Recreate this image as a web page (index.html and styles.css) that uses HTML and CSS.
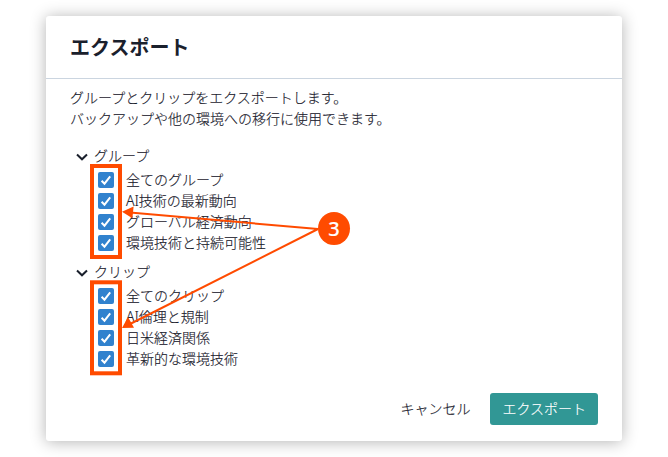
FILE: index.html
```html
<!DOCTYPE html>
<html lang="ja">
<head>
<meta charset="utf-8">
<title>エクスポート</title>
<link rel="stylesheet" href="styles.css">
</head>
<body>
<section class="dialog">
  <header class="dialog-header"><h1>エクスポート</h1></header>
  <div class="dialog-body">
    <p>グループとクリップをエクスポートします。<br>バックアップや他の環境への移行に使用できます。</p>
    <div class="group">
      <div class="group-title"><svg class="chevron" viewBox="0 0 12 8"><path d="M1 1.5 6 6.3 11 1.5"/></svg>グループ</div>
      <ul class="options">
        <li><span class="check"><svg viewBox="0 0 16 16"><path d="M3.6 8.7 6.5 11.7 12.2 4.4"/></svg></span>全てのグループ</li>
        <li><span class="check"><svg viewBox="0 0 16 16"><path d="M3.6 8.7 6.5 11.7 12.2 4.4"/></svg></span>AI技術の最新動向</li>
        <li><span class="check"><svg viewBox="0 0 16 16"><path d="M3.6 8.7 6.5 11.7 12.2 4.4"/></svg></span>グローバル経済動向</li>
        <li><span class="check"><svg viewBox="0 0 16 16"><path d="M3.6 8.7 6.5 11.7 12.2 4.4"/></svg></span>環境技術と持続可能性</li>
      </ul>
    </div>
    <div class="group">
      <div class="group-title"><svg class="chevron" viewBox="0 0 12 8"><path d="M1 1.5 6 6.3 11 1.5"/></svg>クリップ</div>
      <ul class="options">
        <li><span class="check"><svg viewBox="0 0 16 16"><path d="M3.6 8.7 6.5 11.7 12.2 4.4"/></svg></span>全てのクリップ</li>
        <li><span class="check"><svg viewBox="0 0 16 16"><path d="M3.6 8.7 6.5 11.7 12.2 4.4"/></svg></span>AI倫理と規制</li>
        <li><span class="check"><svg viewBox="0 0 16 16"><path d="M3.6 8.7 6.5 11.7 12.2 4.4"/></svg></span>日米経済関係</li>
        <li><span class="check"><svg viewBox="0 0 16 16"><path d="M3.6 8.7 6.5 11.7 12.2 4.4"/></svg></span>革新的な環境技術</li>
      </ul>
    </div>
  </div>
  <footer class="dialog-footer">
    <button class="btn">キャンセル</button>
    <button class="btn primary">エクスポート</button>
  </footer>
</section>
<svg class="callout" viewBox="0 0 668 457">
  <g class="callout-lines">
    <rect x="92" y="166" width="28" height="91" stroke-width="4"/>
    <rect x="92" y="282.3" width="28" height="91" stroke-width="4"/>
    <path d="M318 229 130 212.5M318 229 130 324" stroke-width="2"/>
  </g>
  <path class="callout-fill" d="M122 211.8 133.6 206.6 132.4 218.2ZM122 328 128 317 134 327.8Z"/>
</svg>
<span class="callout-number">3</span>
</body>
</html>
```
FILE: styles.css
```css
* { box-sizing: border-box; }
body {
  margin: 0;
  padding: 16px 46px;
  height: 457px;
  overflow: hidden;
  position: relative;
  background: #fff;
  color: #1a202c;
  font: 300 14px/21px "Noto Sans", "Noto Sans CJK JP", sans-serif;
  -webkit-text-stroke: .15px currentColor;
}
.dialog {
  display: flex;
  flex-direction: column;
  width: 576px;
  height: 425px;
  background: #fff;
  border-radius: 3px;
  box-shadow: 0 1px 16px rgba(0, 0, 0, .3);
}
.dialog-header {
  height: 63px;
  padding: 17px 24px 15px;
  border-bottom: 1px solid #cbd5e0;
}
h1 { margin: 0; font-size: 20px; line-height: 30px; font-weight: 700; -webkit-text-stroke: 0; }
.dialog-body { flex: 1; padding: 8px 24px; }
p { margin: 0 0 16px; }
.group { margin-bottom: 8px; }
.group-title { display: flex; align-items: center; gap: 6px; padding-left: 6px; height: 21px; }
.group-title + .options { margin-top: 3px; }
.chevron { width: 12px; height: 8px; margin-top: 2px; fill: none; stroke: #1a202c; stroke-width: 2; }
.options { list-style: none; margin: 0; padding: 0 0 0 28px; }
.options li { display: flex; align-items: center; gap: 12px; height: 21px; }
.check { width: 16px; height: 16px; border-radius: 2px; background: #3182ce; }
.check svg { display: block; fill: none; stroke: #fff; stroke-width: 2; }
.dialog-footer { display: flex; justify-content: flex-end; gap: 8px; padding: 0 24px 16px; }
.btn {
  height: 32px;
  padding: 0 12px 2px;
  border: 0;
  border-radius: 3px;
  background: none;
  color: inherit;
  font: inherit;
}
.primary { background: #319795; color: #fff; }
.callout { position: absolute; left: 0; top: 0; width: 668px; height: 457px; }
.callout-lines { fill: none; stroke: #ff4b00; }
.callout-fill { fill: #ff4b00; }
.callout-number {
  position: absolute;
  left: 318px;
  top: 212px;
  width: 32px;
  height: 33px;
  border-radius: 50%;
  background: #ff4b00;
  color: #fff;
  font: 500 20px/33px "Noto Sans", sans-serif;
  text-align: center;
}
```
